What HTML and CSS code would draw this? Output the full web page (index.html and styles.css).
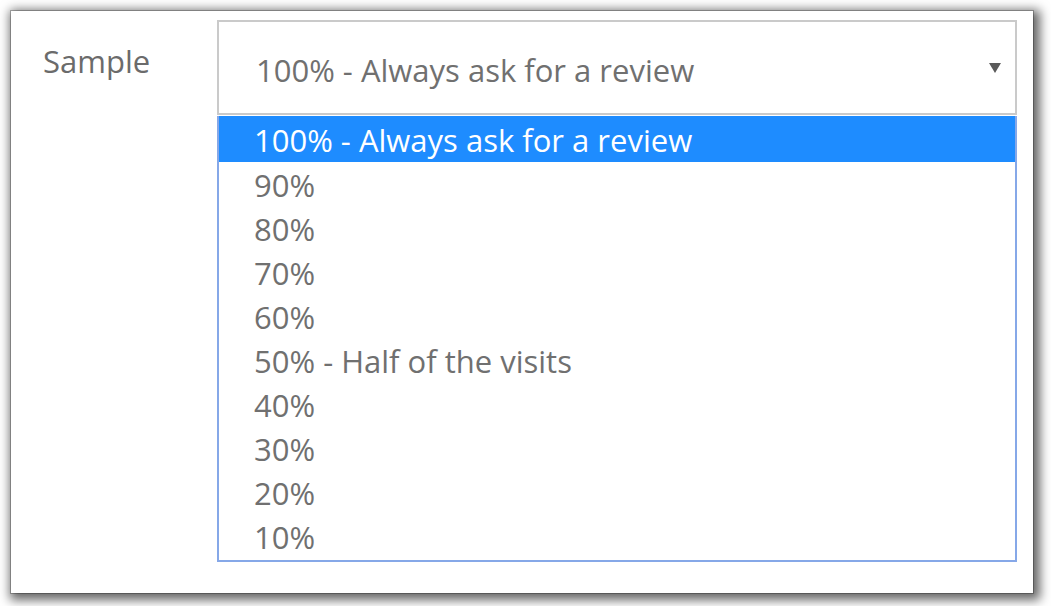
FILE: index.html
```html
<!DOCTYPE html>
<html>
<head>
<meta charset="utf-8">
<link rel="stylesheet" href="styles.css">
</head>
<body>
<div class="panel">
  <div class="label">Sample</div>
  <div class="field">
    <div class="select">
      <span class="value">100% - Always ask for a review</span>
      <svg class="arrow" width="14" height="12" viewBox="0 0 14 12"><path d="M1 1 L13 1 L7 11 Z" fill="#5a5a5a"/></svg>
    </div>
    <ul class="list">
      <li class="item selected">100% - Always ask for a review</li>
      <li class="item">90%</li>
      <li class="item">80%</li>
      <li class="item">70%</li>
      <li class="item">60%</li>
      <li class="item">50% - Half of the visits</li>
      <li class="item">40%</li>
      <li class="item">30%</li>
      <li class="item">20%</li>
      <li class="item">10%</li>
    </ul>
  </div>
</div>
</body>
</html>
```

FILE: styles.css
```css
html, body {
  margin: 0;
  padding: 0;
  background: #ffffff;
}

body {
  font-family: "Open Sans", "DejaVu Sans", sans-serif;
  color: #6b6b6b;
  min-height: 606px;
  padding-top: 11px;
  box-sizing: border-box;
}

.panel {
  margin: 0 0 0 11px;
  width: 1022px;
  height: 582px;
  background: #ffffff;
  box-shadow: 0 0 0 1px rgba(0, 0, 0, 0.25), 3px 3px 10px 4px rgba(0, 0, 0, 0.6);
  display: flex;
  align-items: flex-start;
  box-sizing: border-box;
  padding: 9px 0 0 32px;
}

.label {
  width: 174px;
  font-size: 31px;
  line-height: 44px;
  margin-top: 19px;
  color: #6b6b6b;
}

.field {
  width: 800px;
  display: flex;
  flex-direction: column;
}

.select {
  height: 95px;
  border: 2px solid #cacaca;
  box-sizing: border-box;
  display: flex;
  align-items: center;
  padding: 4px 13px 0 37px;
  font-size: 31px;
}

.value {
  flex: 1;
  color: #707070;
}

.arrow {
  display: block;
  margin-top: -4px;
}

.list {
  list-style: none;
  margin: 1px 0 0 0;
  padding: 0 0 2px 0;
  border: 2px solid #86a8e8;
  border-top: none;
}

.item {
  height: 44px;
  line-height: 46px;
  font-size: 31px;
  padding-left: 35px;
  color: #707070;
}

.item.selected {
  background: #1e8cff;
  color: #ffffff;
  height: 46px;
  line-height: 48px;
}
```
